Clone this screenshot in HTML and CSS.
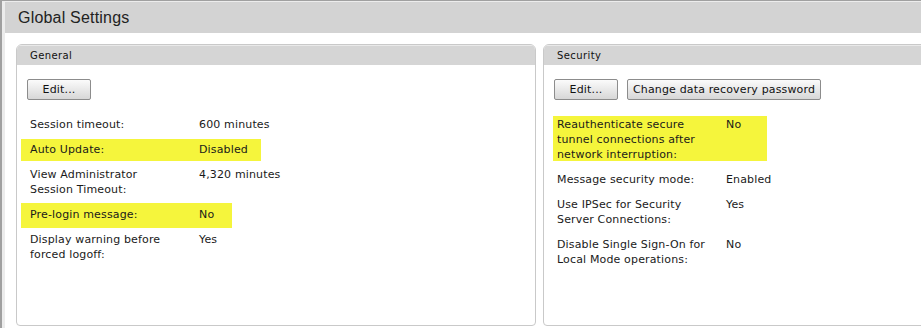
FILE: index.html
```html
<!DOCTYPE html>
<html lang="en">
<head>
    <meta charset="UTF-8">
    <title>Global Settings</title>
    <link rel="stylesheet" href="styles.css">
</head>
<body>
    <div class="frame">
        <div class="frame-inner">
            <div class="title-bar">Global Settings</div>
            <div class="panels">
                <div class="panel">
                    <div class="panel-header">General</div>
                    <div class="panel-body">
                        <div class="buttons">
                            <button class="btn btn-edit">Edit...</button>
                        </div>
                        <div class="rows">
                            <div class="row">
                                <div class="label">Session timeout:</div>
                                <div class="value">600 minutes</div>
                            </div>
                            <div class="row mark mark-auto">
                                <div class="label">Auto Update:</div>
                                <div class="value">Disabled</div>
                            </div>
                            <div class="row">
                                <div class="label">View Administrator Session Timeout:</div>
                                <div class="value">4,320 minutes</div>
                            </div>
                            <div class="row mark mark-prelogin">
                                <div class="label">Pre-login message:</div>
                                <div class="value">No</div>
                            </div>
                            <div class="row">
                                <div class="label">Display warning before forced logoff:</div>
                                <div class="value">Yes</div>
                            </div>
                        </div>
                    </div>
                </div>
                <div class="panel">
                    <div class="panel-header">Security</div>
                    <div class="panel-body">
                        <div class="buttons">
                            <button class="btn btn-edit">Edit...</button>
                            <button class="btn">Change data recovery password</button>
                        </div>
                        <div class="rows">
                            <div class="row mark mark-reauth">
                                <div class="label">Reauthenticate secure tunnel connections after network interruption:</div>
                                <div class="value">No</div>
                            </div>
                            <div class="row">
                                <div class="label">Message security mode:</div>
                                <div class="value">Enabled</div>
                            </div>
                            <div class="row">
                                <div class="label">Use IPSec for Security Server Connections:</div>
                                <div class="value">Yes</div>
                            </div>
                            <div class="row">
                                <div class="label">Disable Single Sign-On for Local Mode operations:</div>
                                <div class="value">No</div>
                            </div>
                        </div>
                    </div>
                </div>
            </div>
        </div>
    </div>
</body>
</html>
```

FILE: styles.css
```css
html, body {
    margin: 0;
    padding: 0;
    height: 100%;
    overflow: hidden;
    background: #fff;
}
body {
    font-family: "DejaVu Sans", Verdana, sans-serif;
    font-size: 11px;
    letter-spacing: 0.15px;
    color: #1a1a1a;
}
.frame {
    height: 328px;
    border-left: 2px solid #a0a0a0;
    border-top: 1px solid #a0a0a0;
    box-sizing: border-box;
}
.frame-inner {
    height: 100%;
    border-left: 3px solid #ececec;
    border-top: 1px solid #ececec;
    box-sizing: border-box;
}
.title-bar {
    height: 31px;
    line-height: 31px;
    padding-left: 13px;
    background: #d3d3d3;
    font-family: "Liberation Sans", Arial, sans-serif;
    font-size: 16px;
    letter-spacing: 0.2px;
    color: #222;
}
.panels {
    display: flex;
    gap: 7px;
    padding: 11px 0 0 11px;
}
.panel {
    flex-shrink: 0;
    width: 520px;
    height: 282px;
    box-sizing: border-box;
    border: 1px solid #c9c9c9;
    border-radius: 6px 6px 4px 4px;
    overflow: hidden;
}
.panel-header {
    height: 19px;
    line-height: 19px;
    padding-left: 13px;
    background: #d5d5d5;
    border-top: 1px solid #e9e9e9;
    font-size: 10px;
    letter-spacing: 0.4px;
    color: #111;
}
.panel-body {
    padding: 14px 0 0 10px;
}
.buttons {
    display: flex;
    gap: 9px;
    margin-bottom: 17px;
}
.btn {
    height: 21px;
    padding: 0 5px;
    border: 1px solid #8c8c8c;
    border-radius: 2px;
    background: linear-gradient(#fbfbfb, #d7d7d7);
    font-family: "DejaVu Sans", Verdana, sans-serif;
    font-size: 11px;
    letter-spacing: 0.15px;
    color: #111;
}
.btn-edit {
    width: 64px;
}
.rows {
    display: flex;
    flex-direction: column;
    gap: 10px;
    padding-left: 3px;
}
.row {
    display: grid;
    grid-template-columns: 169px auto;
    line-height: 15px;
    position: relative;
    z-index: 0;
}
.label {
    width: 151px;
}
.mark::before {
    content: '';
    position: absolute;
    z-index: -1;
    background: #f5f53c;
}
.mark-auto::before {
    left: -9px;
    top: -3px;
    width: 240px;
    height: 22px;
}
.mark-prelogin::before {
    left: -9px;
    top: -4px;
    width: 211px;
    height: 25px;
}
.mark-reauth::before {
    left: -4px;
    top: -1px;
    width: 214px;
    height: 45px;
}
```
